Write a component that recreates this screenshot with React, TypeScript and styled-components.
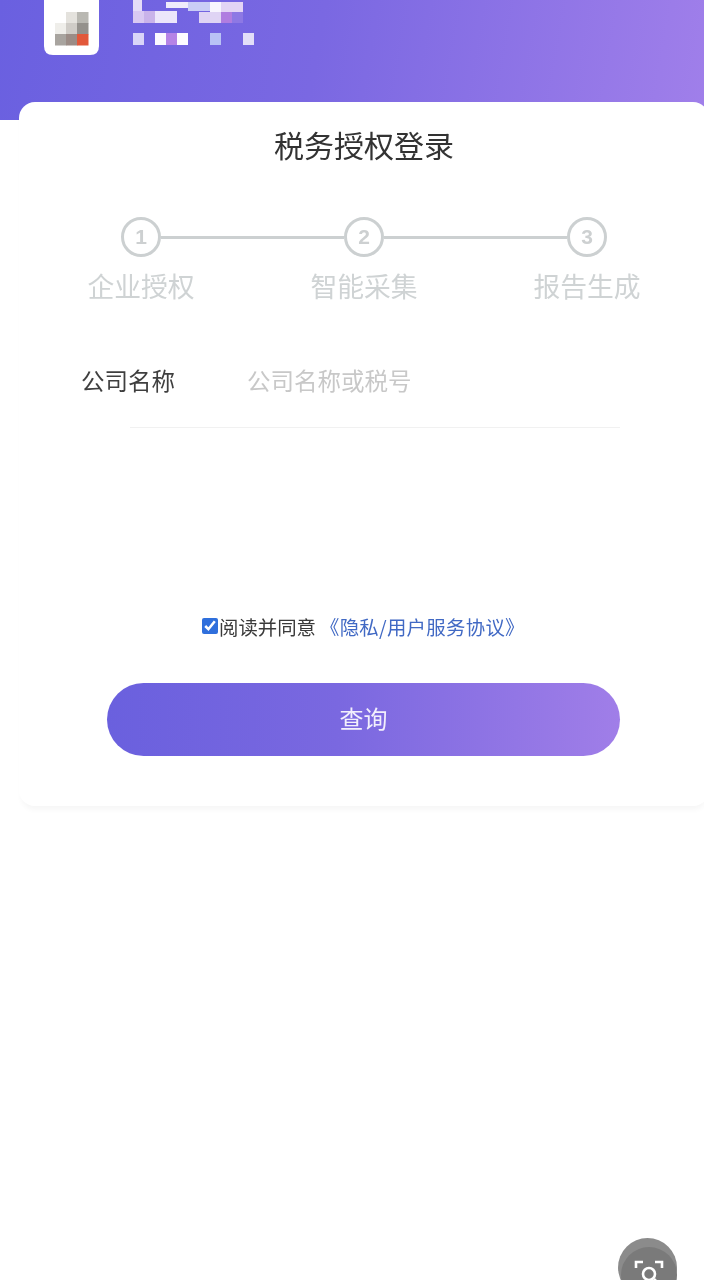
import React from "react";
import styled, { createGlobalStyle } from "styled-components";

const Global = createGlobalStyle`
  html, body { margin: 0; padding: 0; background: #fff; }
  body { font-family: "Noto Sans CJK SC", "Liberation Sans", sans-serif; }
  * { box-sizing: border-box; }
`;

const Page = styled.div`
  position: relative;
  width: 704px;
  height: 1280px;
  overflow: hidden;
  background: #fff;
`;

const Header = styled.header`
  display: flex;
  align-items: flex-start;
  gap: 33px;
  height: 120px;
  padding-left: 43px;
  background: linear-gradient(100deg, #6a60e0 0%, #7a68e2 45%, #a07fea 100%);
`;

const Logo = styled.svg`
  display: block;
  width: 57px;
  height: 56px;
  flex: none;
  filter: blur(0.6px);
`;

const Brand = styled.svg`
  display: block;
  width: 122px;
  height: 46px;
  flex: none;
  filter: blur(0.6px);
`;

const Card = styled.main`
  width: 690px;
  height: 704px;
  margin: -18px 0 0 19px;
  padding-top: 21px;
  background: #fff;
  border-radius: 16px;
  box-shadow: 0 6px 5px -2px rgba(0, 0, 0, 0.035);
  filter: blur(0.5px);
`;

const Title = styled.h1`
  margin: 0;
  height: 42px;
  font-size: 30px;
  line-height: 42px;
  font-weight: 400;
  text-align: center;
  color: #333;
`;

const Track = styled.div`
  display: flex;
  align-items: center;
  margin-top: 52px;
  padding: 0 102px;
`;

const Dot = styled.div`
  display: flex;
  align-items: center;
  justify-content: center;
  width: 40px;
  height: 40px;
  flex: none;
  border: 3px solid #ccd0d1;
  border-radius: 50%;
  font-family: "Liberation Sans", sans-serif;
  font-size: 21px;
  font-weight: 700;
  color: #cdd0d1;
`;

const Connector = styled.div`
  flex: 1;
  height: 3px;
  background: #ccd0d1;
`;

const Labels = styled.div`
  display: grid;
  grid-template-columns: repeat(3, 223px);
  justify-content: center;
  margin-top: 10px;
`;

const StepLabel = styled.div`
  font-size: 26.8px;
  line-height: 38px;
  text-align: center;
  color: #cfd3d4;
`;

const Field = styled.div`
  display: flex;
  align-items: center;
  height: 76px;
  margin: 46px 0 0 62px;
  padding-bottom: 18px;
`;

const FieldLabel = styled.label`
  width: 166px;
  font-size: 23.5px;
  line-height: 34px;
  color: #3f3f3f;
`;

const Placeholder = styled.span`
  font-size: 23.5px;
  line-height: 34px;
  color: #c8c8c8;
`;

const Rule = styled.div`
  width: 490px;
  height: 1px;
  margin: 0 0 0 111px;
  background: #f1f1f1;
`;

const Agreement = styled.div`
  display: flex;
  align-items: center;
  height: 30px;
  margin: 183px 0 0 183px;
  font-size: 19.4px;
  color: #3a3a3a;
  white-space: nowrap;
`;

const Check = styled.input`
  width: 16px;
  height: 16px;
  margin: 0 1px 0 0;
  flex: none;
  accent-color: #2f6fdc;
`;

const Link = styled.a`
  margin-left: 4px;
  color: #4169c4;
  letter-spacing: 0.3px;
`;

const Submit = styled.button`
  display: block;
  width: 513px;
  height: 73px;
  margin: 42px 0 0 88px;
  padding: 0 0 4px;
  border: 0;
  border-radius: 37px;
  background: linear-gradient(90deg, #6a60de 0%, #7a68e0 45%, #a07ee8 100%);
  font-family: inherit;
  font-size: 24px;
  color: #f2effc;
`;

const Floating = styled.div`
  position: absolute;
  left: 618px;
  top: 1238px;
  width: 59px;
  height: 59px;
  border-radius: 50%;
  background: #8b8b8b;
  filter: blur(0.5px);
`;

const FloatingInner = styled.svg`
  position: absolute;
  left: 3px;
  top: 9px;
  width: 56px;
  height: 50px;
`;

const logoCells: [number, number, string][] = [
  [23, 12, "#e4e2dd"], [34, 12, "#b9b8b2"],
  [12, 23, "#efeeea"], [23, 23, "#cfccc7"], [34, 23, "#94918c"],
  [12, 34, "#a8a49f"], [23, 34, "#9b8c86"], [34, 34, "#e2583a"],
];

const brandCells: [number, number, number, number, string][] = [
  [0, 0, 9, 11, "#e5dcf8"], [0, 11, 11, 12, "#d9c9f2"], [11, 11, 11, 12, "#c9b3ea"],
  [22, 11, 22, 12, "#ece6fb"], [33, 2, 22, 6, "#efecfb"],
  [55, 2, 22, 9, "#c9cdf6"], [77, 2, 11, 10, "#f7f5fe"], [88, 2, 22, 10, "#e3d4f5"],
  [66, 12, 22, 11, "#dfd4f4"], [88, 12, 11, 11, "#b07de0"], [99, 12, 11, 11, "#8d78e4"],
];

const brandDots: [number, string][] = [
  [0, "#d9d5f8"], [22, "#fbfaff"], [33, "#b583e6"], [44, "#fdfcff"],
  [77, "#b9c2f5"], [110, "#e3def8"],
];

export default function App() {
  return (
    <Page>
      <Global />
      <Header>
        <Logo viewBox="0 0 57 56">
          <path d="M1 0h55v46q0 9-9 9H10q-9 0-9-9z" fill="#fff" />
          {logoCells.map(([x, y, c]) => (
            <rect key={`${x}-${y}`} x={x} y={y} width="11.5" height="11.5" fill={c} />
          ))}
        </Logo>
        <Brand viewBox="0 0 122 46">
          {brandCells.map(([x, y, w, h, c], i) => (
            <rect key={i} x={x} y={y} width={w} height={h} fill={c} />
          ))}
          {brandDots.map(([x, c]) => (
            <rect key={x} x={x} y="33" width="11" height="12" fill={c} />
          ))}
        </Brand>
      </Header>
      <Card>
        <Title>税务授权登录</Title>
        <Track>
          <Dot>1</Dot>
          <Connector />
          <Dot>2</Dot>
          <Connector />
          <Dot>3</Dot>
        </Track>
        <Labels>
          <StepLabel>企业授权</StepLabel>
          <StepLabel>智能采集</StepLabel>
          <StepLabel>报告生成</StepLabel>
        </Labels>
        <Field>
          <FieldLabel>公司名称</FieldLabel>
          <Placeholder>公司名称或税号</Placeholder>
        </Field>
        <Rule />
        <Agreement>
          <Check type="checkbox" defaultChecked readOnly />
          阅读并同意
          <Link>《隐私/用户服务协议》</Link>
        </Agreement>
        <Submit>查询</Submit>
      </Card>
      <Floating>
        <FloatingInner viewBox="0 0 56 50">
          <circle cx="28" cy="28" r="28" fill="#7a7a7a" />
          <g fill="none" stroke="#fff" strokeWidth="2.6">
            <path d="M15 21v-6h7M34 15h7v6" />
            <circle cx="28" cy="27" r="6" />
            <path d="M33 32l4 4" />
          </g>
        </FloatingInner>
      </Floating>
    </Page>
  );
}
